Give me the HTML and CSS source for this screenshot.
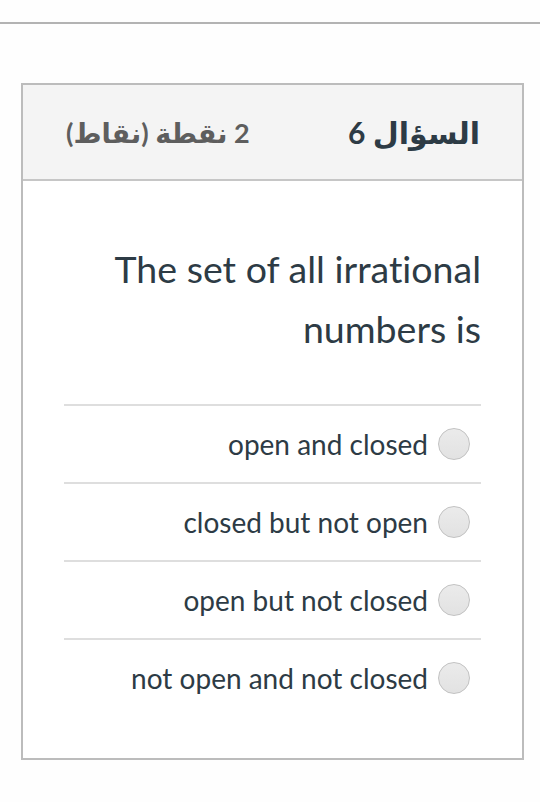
FILE: index.html
```html
<!DOCTYPE html>
<html lang="ar" dir="rtl">
<head>
<meta charset="utf-8">
<link rel="stylesheet" href="styles.css">
</head>
<body>
<div class="topbar"></div>
<div class="card">
  <div class="card-header">
    <span class="title">السؤال 6</span>
    <span class="points">2 نقطة (نقاط)</span>
  </div>
  <div class="card-body">
    <p class="question">The set of all irrational numbers is</p>
    <ul class="answers">
      <li class="answer"><span class="radio"></span><span class="label">open and closed</span></li>
      <li class="answer"><span class="radio"></span><span class="label">closed but not open</span></li>
      <li class="answer"><span class="radio"></span><span class="label">open but not closed</span></li>
      <li class="answer"><span class="radio"></span><span class="label">not open and not closed</span></li>
    </ul>
  </div>
</div>
</body>
</html>
```
FILE: styles.css
```css
html, body {
  margin: 0;
  padding: 0;
  background: #fefefe;
  font-family: Lato, "DejaVu Sans", sans-serif;
  font-variant-ligatures: none;
  color: #2d3b45;
}
.topbar {
  height: 22px;
  border-bottom: 2px solid #b3b3b3;
}
.card {
  margin: 59px 16px 0 21px;
  border: 2px solid #bcbcbc;
  background: #ffffff;
}
.card-header {
  background: #f4f4f4;
  height: 94px;
  border-bottom: 2px solid #c6c6c6;
  display: flex;
  align-items: center;
  justify-content: space-between;
  padding: 0 42px 0 43px;
}
.title {
  font-weight: 700;
  font-size: 30px;
  color: #2d3b45;
}
.points {
  font-weight: 700;
  font-size: 27px;
  color: #5e5e5e;
}
.card-body {
  padding: 58px 41px 42px 41px;
}
.question {
  margin: 0 0 45px 0;
  font-size: 37.5px;
  line-height: 60px;
  text-align: right;
}
.answers {
  list-style: none;
  margin: 0;
  padding: 0;
}
.answer {
  border-top: 2px solid #dedede;
  height: 76px;
  display: flex;
  align-items: center;
  gap: 10px;
  padding-right: 11px;
}
.radio {
  width: 30px;
  height: 30px;
  border-radius: 50%;
  border: 1px solid #c2c2c2;
  background: linear-gradient(#ebebeb, #e2e2e2);
  flex: none;
}
.label {
  font-size: 28px;
}
```
